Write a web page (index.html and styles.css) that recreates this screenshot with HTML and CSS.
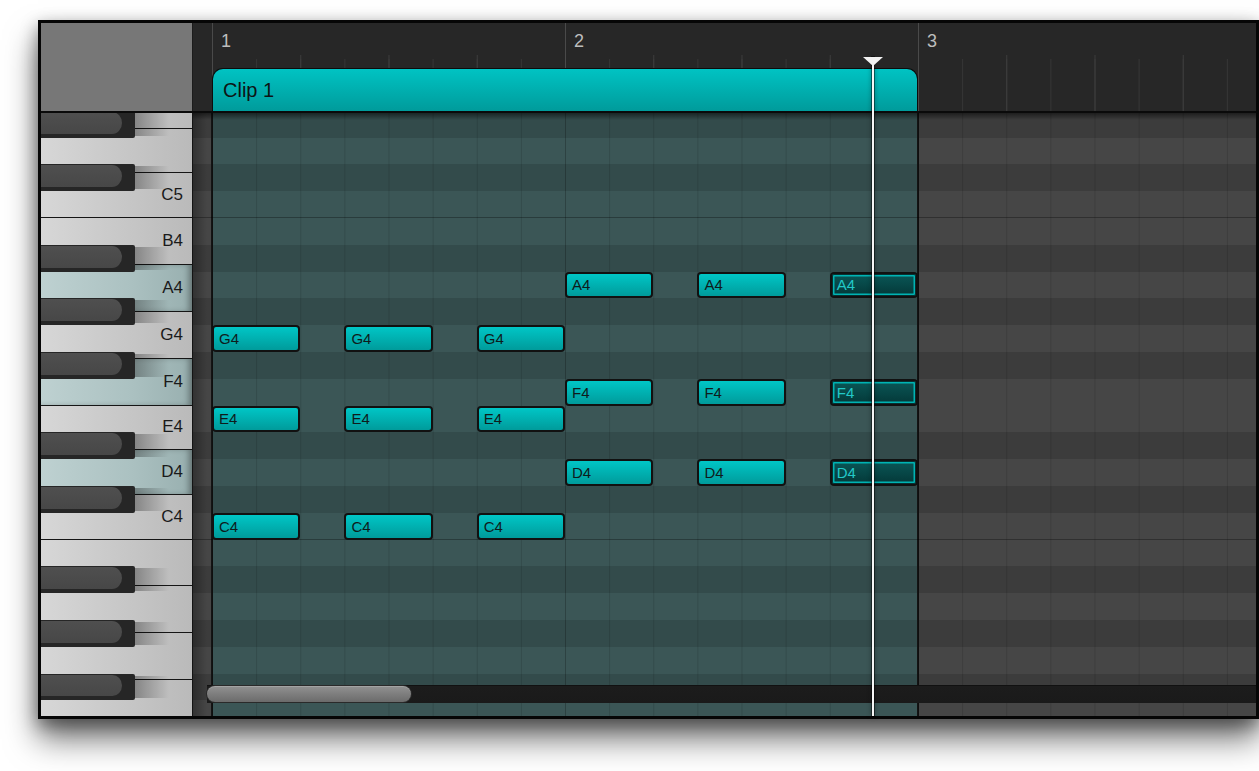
FILE: index.html
```html
<!DOCTYPE html>
<html>
<head>
<meta charset="utf-8">
<link rel="stylesheet" href="styles.css">
</head>
<body>
<div class="frame">
  <div class="header">
    <div class="corner"></div>
    <div class="ruler">
      <div class="labels">
        <div class="bar-num">1</div>
        <div class="bar-num">2</div>
        <div class="bar-num">3</div>
      </div>
      <div class="clip">Clip 1</div>
    </div>
  </div>
  <div class="body">
    <div class="piano">
      <div class="keys">
        <div class="wk k3"></div>
        <div class="wk k3"></div>
        <div class="wk k3">C5</div>
        <div class="wk k4">B4</div>
        <div class="wk k4 hl">A4</div>
        <div class="wk k4">G4</div>
        <div class="wk k4 hl">F4</div>
        <div class="wk k3">E4</div>
        <div class="wk k3 hl">D4</div>
        <div class="wk k3">C4</div>
        <div class="wk k4"></div>
        <div class="wk k4"></div>
        <div class="wk k4"></div>
        <div class="wk k4"></div>
      </div>
      <div class="bk" style="--i:1"></div>
      <div class="bk" style="--i:3"></div>
      <div class="bk" style="--i:6"></div>
      <div class="bk" style="--i:8"></div>
      <div class="bk" style="--i:10"></div>
      <div class="bk" style="--i:13"></div>
      <div class="bk" style="--i:15"></div>
      <div class="bk" style="--i:18"></div>
      <div class="bk" style="--i:20"></div>
      <div class="bk" style="--i:22"></div>
    </div>
    <div class="timeline">
      <div class="lanes">
        <div class="row w"></div>
        <div class="row b"></div>
        <div class="row w"></div>
        <div class="row b"></div>
        <div class="row w oct"></div>
        <div class="row w"></div>
        <div class="row b"></div>
        <div class="row w">
          <div class="note" style="grid-column:10 / span 2">A4</div>
          <div class="note" style="grid-column:13 / span 2">A4</div>
          <div class="note sel" style="grid-column:16 / span 2">A4</div>
        </div>
        <div class="row b"></div>
        <div class="row w">
          <div class="note" style="grid-column:2 / span 2">G4</div>
          <div class="note" style="grid-column:5 / span 2">G4</div>
          <div class="note" style="grid-column:8 / span 2">G4</div>
        </div>
        <div class="row b"></div>
        <div class="row w">
          <div class="note" style="grid-column:10 / span 2">F4</div>
          <div class="note" style="grid-column:13 / span 2">F4</div>
          <div class="note sel" style="grid-column:16 / span 2">F4</div>
        </div>
        <div class="row w">
          <div class="note" style="grid-column:2 / span 2">E4</div>
          <div class="note" style="grid-column:5 / span 2">E4</div>
          <div class="note" style="grid-column:8 / span 2">E4</div>
        </div>
        <div class="row b"></div>
        <div class="row w">
          <div class="note" style="grid-column:10 / span 2">D4</div>
          <div class="note" style="grid-column:13 / span 2">D4</div>
          <div class="note sel" style="grid-column:16 / span 2">D4</div>
        </div>
        <div class="row b"></div>
        <div class="row w oct">
          <div class="note" style="grid-column:2 / span 2">C4</div>
          <div class="note" style="grid-column:5 / span 2">C4</div>
          <div class="note" style="grid-column:8 / span 2">C4</div>
        </div>
        <div class="row w"></div>
        <div class="row b"></div>
        <div class="row w"></div>
        <div class="row b"></div>
        <div class="row w"></div>
        <div class="row b"></div>
        <div class="row w"></div>
      </div>
      <div class="scrollbar"><div class="thumb"></div></div>
    </div>
  </div>
  <div class="playhead"></div>
</div>
</body>
</html>
```
FILE: styles.css
```css
* { box-sizing: border-box; }
html, body { margin: 0; background: #ffffff; }
body {
  padding: 20px 0 0 38px;
  height: 771px;
  overflow: hidden;
  font-family: "Liberation Sans", Arial, sans-serif;
}
.frame {
  position: relative;
  width: 1221px;
  height: 699px;
  border: 3px solid #060606;
  background: #222;
  display: flex;
  flex-direction: column;
  box-shadow: 0 20px 30px rgba(0,0,0,0.55), 0 6px 16px rgba(0,0,0,0.4);
}

/* header */
.header {
  height: 90px;
  display: flex;
  border-bottom: 2px solid #0a0a0a;
  flex-shrink: 0;
}
.corner {
  width: 152px;
  flex-shrink: 0;
  background: #777777;
  border-right: 1px solid #1c1c1c;
}
.ruler {
  flex: 1;
  min-width: 0;
  overflow: hidden;
  display: flex;
  flex-direction: column;
  background:
    linear-gradient(90deg, #4a4a4a 0 1px, transparent 1px) 19px 0 / 353px 100% repeat-x,
    linear-gradient(90deg, #3c3c3c 0 1px, transparent 1px) 19px 100% / 88.25px 56px repeat-x,
    linear-gradient(90deg, #363636 0 1px, transparent 1px) 19px 100% / 44.125px 52px repeat-x,
    #272727;
}
.labels {
  height: 45px;
  display: flex;
  padding-left: 19px;
  flex-shrink: 0;
}
.bar-num {
  width: 353px;
  flex-shrink: 0;
  padding: 8px 0 0 9px;
  color: #bdbdbd;
  font-size: 18px;
  line-height: 20px;
}
.clip {
  height: 43px;
  width: 706px;
  flex-shrink: 0;
  margin-left: 19px;
  border: 1px solid #0c0c0c;
  border-bottom: none;
  border-radius: 11px 11px 0 0;
  background: linear-gradient(#00c3c3, #009b9b);
  color: #0d1414;
  font-size: 20px;
  line-height: 42px;
  padding-left: 10px;
}

/* body */
.body {
  flex: 1;
  display: flex;
  overflow: hidden;
  position: relative;
}
.piano {
  width: 152px;
  flex-shrink: 0;
  position: relative;
  overflow: hidden;
  border-right: 1px solid #141414;
}
.keys {
  margin-top: -29px;
  display: flex;
  flex-direction: column;
}
.wk {
  flex-shrink: 0;
  display: flex;
  align-items: center;
  justify-content: flex-end;
  padding-right: 9px;
  font-size: 17px;
  color: #1a1a1a;
  border-bottom: 1px solid #151515;
  background: linear-gradient(90deg, #d7d7d7 0%, #c7c7c7 55%, #bababa 100%);
}
.k3 { height: 44.667px; }
.k4 { height: 46.9px; }
.wk.hl {
  background: linear-gradient(90deg, #bed1d1 0%, #abc1c1 60%, #98afaf 100%);
  box-shadow: inset -5px 0 6px -2px rgba(0,0,0,0.35);
}
.bk {
  position: absolute;
  left: 0;
  width: 94px;
  height: 26.8px;
  top: calc(var(--i) * 26.8px - 29px);
  background: #262626;
  border-radius: 0 2px 2px 0;
}
.bk::before {
  content: "";
  position: absolute;
  left: 0;
  top: 1px;
  bottom: 4px;
  right: 13px;
  background: linear-gradient(#4f4f4f, #474747);
  border-radius: 0 10px 10px 0 / 0 50% 50% 0;
}
.bk::after {
  content: "";
  position: absolute;
  left: 94px;
  width: 34px;
  top: 2px;
  bottom: 2px;
  background: linear-gradient(90deg, rgba(0,0,0,0.32), rgba(0,0,0,0));
}

.timeline {
  flex: 1;
  min-width: 0;
  position: relative;
  overflow: hidden;
}
.timeline::before {
  content: "";
  position: absolute;
  left: 0;
  top: 0;
  bottom: 0;
  width: 14px;
  background: linear-gradient(90deg, rgba(0,0,0,0.28), rgba(0,0,0,0));
  z-index: 2;
}
.timeline::after {
  content: "";
  position: absolute;
  left: 0;
  right: 0;
  top: 0;
  height: 7px;
  background: linear-gradient(rgba(0,0,0,0.5), rgba(0,0,0,0));
  z-index: 2;
}
.lanes {
  margin-top: -29px;
  display: flex;
  flex-direction: column;
}
.row {
  height: 26.8px;
  flex-shrink: 0;
  display: grid;
  grid-template-columns: 19px repeat(24, 44.125px);
  grid-template-rows: 100%;
  background:
    linear-gradient(90deg, rgba(0,0,0,0.12) 0 1px, transparent 1px) 19px 0 / 353px 100% repeat-x,
    linear-gradient(90deg, rgba(0,0,0,0.13) 0 1px, transparent 1px) 19px 0 / 44.125px 100% repeat-x,
    linear-gradient(90deg, var(--g) 0 18px, #141414 18px 20px, var(--t) 20px 724px, #141414 724px 726px, var(--g) 726px);
}
.row.w { --g: #464646; --t: #3b5656; }
.row.b { --g: #3c3c3c; --t: #334b4b; }
.row.oct { box-shadow: inset 0 -1px 0 rgba(0,0,0,0.3); }

.note {
  grid-row: 1;
  border: 2px solid #111;
  border-radius: 4px;
  background: linear-gradient(#00c6c6, #009b9b);
  color: #0e1c1c;
  font-size: 15px;
  line-height: 1;
  padding-left: 5px;
  display: flex;
  align-items: center;
  position: relative;
  z-index: 1;
}
.note.sel {
  background: linear-gradient(#0a5757, #043838);
  box-shadow: inset 0 0 0 1px #073030, inset 0 0 0 2.5px #00b3b3;
  color: #22c8c8;
}

.scrollbar {
  position: absolute;
  left: 14px;
  right: 0;
  bottom: 13px;
  height: 18px;
  background: linear-gradient(#111 0 1px, #1c1c1c 1px, #1a1a1a);
  z-index: 3;
}
.thumb {
  width: 204px;
  height: 16px;
  margin-top: 1px;
  border-radius: 8px;
  background: linear-gradient(#919191, #6b6b6b);
  box-shadow: inset 0 1px 0 rgba(255,255,255,0.18), 0 0 0 1px #2a2a2a;
}

.playhead {
  position: absolute;
  left: 831px;
  top: 34px;
  bottom: 0;
  width: 2px;
  background: #f6f6f6;
  box-shadow: 0 0 0 1px rgba(0,0,0,0.45), 0 0 5px rgba(0,0,0,0.55);
  z-index: 5;
}
.playhead::before {
  content: "";
  position: absolute;
  top: 0;
  left: -9px;
  border-left: 10px solid transparent;
  border-right: 10px solid transparent;
  border-top: 9px solid #f2f2f2;
}
```
